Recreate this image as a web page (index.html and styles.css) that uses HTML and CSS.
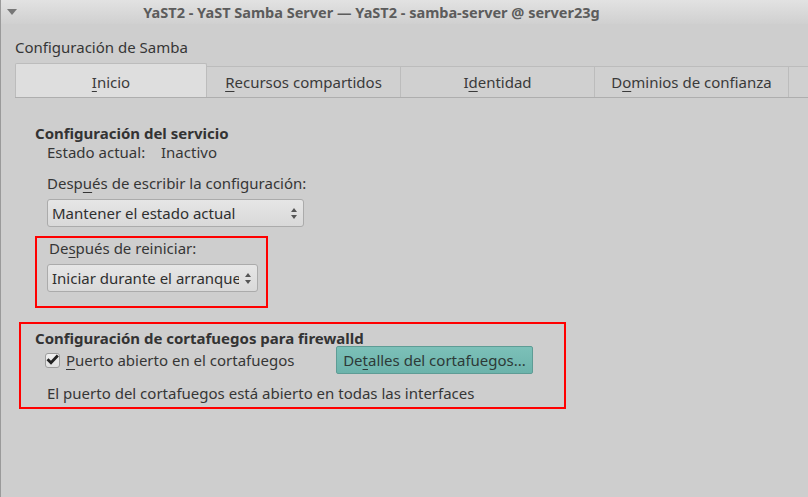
FILE: index.html
```html
<!DOCTYPE html>
<html lang="es">
<head>
<meta charset="utf-8">
<title>YaST2 - YaST Samba Server</title>
<link rel="stylesheet" href="styles.css">
</head>
<body>
<div class="window">
  <div class="titlebar">
    <svg class="menu-arrow" width="10" height="6" viewBox="0 0 10 6"><path d="M0 0 H10 L5 6 Z" fill="#777"/></svg>
    <div class="title">YaST2 - YaST Samba Server — YaST2 - samba-server @ server23g</div>
  </div>
  <div class="heading">Configuración de Samba</div>
  <div class="tabs">
    <div class="tab active"><u>I</u>nicio</div>
    <div class="tab"><u>R</u>ecursos compartidos</div>
    <div class="tab">I<u>d</u>entidad</div>
    <div class="tab">D<u>o</u>minios de confianza</div>
    <div class="tab tab-rest"></div>
  </div>
  <div class="content">
    <div class="section-title">Configuración del servicio</div>
    <div class="state-row"><span class="state-label">Estado actual:</span><span>Inactivo</span></div>
    <div class="field-label gap">Desp<u>u</u>és de escribir la configuración:</div>
    <div class="combo combo-wide"><span>Mantener el estado actual</span><span class="spin"><i class="up"></i><i class="down"></i></span></div>
    <div class="mark mark-small">
      <div class="field-label">De<u>s</u>pués de reiniciar:</div>
      <div class="combo combo-narrow"><span>Iniciar durante el arranque</span><span class="spin"><i class="up"></i><i class="down"></i></span></div>
    </div>
    <div class="mark mark-wide">
      <div class="section-title">Configuración de cortafuegos para firewalld</div>
      <div class="fw-row">
        <label class="check">
          <span class="box"><svg width="13" height="11" viewBox="0 0 13 11"><path d="M1.5 5.3 L5 8.8 L11.8 1.5" fill="none" stroke="#222" stroke-width="2.8"/></svg></span>
          <span><u>P</u>uerto abierto en el cortafuegos</span>
        </label>
        <button class="btn">De<u>t</u>alles del cortafuegos...</button>
      </div>
      <div class="fw-note">El puerto del cortafuegos está abierto en todas las interfaces</div>
    </div>
  </div>
</div>
</body>
</html>
```

FILE: styles.css
```css
html, body {
  margin: 0;
  padding: 0;
  background: #cecece;
}
body {
  width: 808px;
  height: 497px;
  overflow: hidden;
  font-family: "Noto Sans", "DejaVu Sans", sans-serif;
  font-size: 15px;
  color: #363636;
}
u {
  text-decoration-thickness: 1px;
  text-underline-offset: 3px;
}
.window {
  height: 497px;
  border-left: 1px solid #9a9a9a;
  box-sizing: border-box;
}
.titlebar {
  height: 24px;
  background: linear-gradient(#e2e2e2, #d0d0d0);
  display: flex;
  align-items: center;
}
.menu-arrow {
  margin-left: 6px;
  margin-top: -1px;
}
.title {
  flex: 1;
  text-align: center;
  padding-right: 82px;
  font-weight: bold;
  font-size: 14.5px;
  color: #5c5c5c;
}
.heading {
  margin: 13px 0 0 14px;
  line-height: 20px;
}
.tabs {
  display: flex;
  margin: 6px 0 0 14px;
  height: 34px;
  border-bottom: 1px solid #aeaeae;
  align-items: flex-end;
}
.tab {
  width: 194px;
  height: 31px;
  box-sizing: border-box;
  border: 1px solid #bcbcbc;
  border-bottom: none;
  border-left: none;
  background: #d0d0d0;
  display: flex;
  align-items: center;
  justify-content: center;
  padding-top: 0;
  color: #3a3a3a;
}
.tab.active {
  width: 192px;
  height: 34px;
  border-left: 1px solid #bcbcbc;
  background: #dedede;
  border-radius: 2px 2px 0 0;
  padding-top: 3px;
}
.tab-rest {
  flex: 1;
  border-right: none;
}
.content {
  padding: 26px 0 0 34px;
}
.section-title {
  font-weight: bold;
  line-height: 19px;
  color: #333;
}
.state-row {
  margin-left: 12px;
  line-height: 19px;
  display: flex;
}
.state-label {
  width: 114px;
}
.field-label {
  margin-left: 12px;
  line-height: 19px;
}
.field-label.gap {
  margin-top: 12px;
}
.combo {
  margin: 6px 0 0 12px;
  height: 28px;
  box-sizing: border-box;
  border: 1px solid #ababab;
  border-radius: 3px;
  background: linear-gradient(#e6e6e6, #d9d9d9);
  display: flex;
  align-items: center;
  padding: 0 6px 0 4px;
  color: #2f2f2f;
}
.combo-wide {
  width: 257px;
}
.combo-narrow {
  width: 211px;
  margin-left: 10px;
}
.combo > span:first-child {
  flex: 1;
  overflow: hidden;
  white-space: nowrap;
}
.spin {
  display: flex;
  flex-direction: column;
  align-items: center;
  gap: 3px;
  margin-left: 6px;
}
.spin i {
  display: block;
  width: 0;
  height: 0;
  border-left: 3px solid transparent;
  border-right: 3px solid transparent;
}
.spin .up {
  border-bottom: 4px solid #555;
}
.spin .down {
  border-top: 4px solid #555;
}
.mark {
  border: 2px solid #f00;
  box-sizing: border-box;
}
.mark-small {
  width: 233px;
  height: 72px;
  margin-top: 9px;
  padding: 1px 0 0 0;
}
.mark-wide {
  width: 547px;
  height: 87px;
  margin: 14px 0 0 -16px;
  padding: 5px 0 0 14px;
}
.fw-row {
  display: flex;
  align-items: center;
  height: 28px;
  margin-top: -2px;
}
.check {
  display: flex;
  align-items: center;
  width: 301px;
  flex-shrink: 0;
}
.box {
  width: 15px;
  height: 15px;
  box-sizing: border-box;
  margin: 0 6px 0 10px;
  border: 1px solid #9c9c9c;
  border-radius: 3px;
  background: linear-gradient(#f0f0f0, #e0e0e0);
  display: flex;
  align-items: center;
  justify-content: center;
}
.box svg {
  margin-top: -1px;
}
.btn {
  width: 197px;
  height: 28px;
  flex-shrink: 0;
  border: 1px solid #5e9c95;
  border-radius: 2px;
  background: linear-gradient(#7cc0b8, #6cb3ab);
  font-family: inherit;
  font-size: 15px;
  color: #2d3a38;
  padding: 0;
}
.fw-note {
  margin: 10px 0 0 12px;
  line-height: 19px;
}
```
